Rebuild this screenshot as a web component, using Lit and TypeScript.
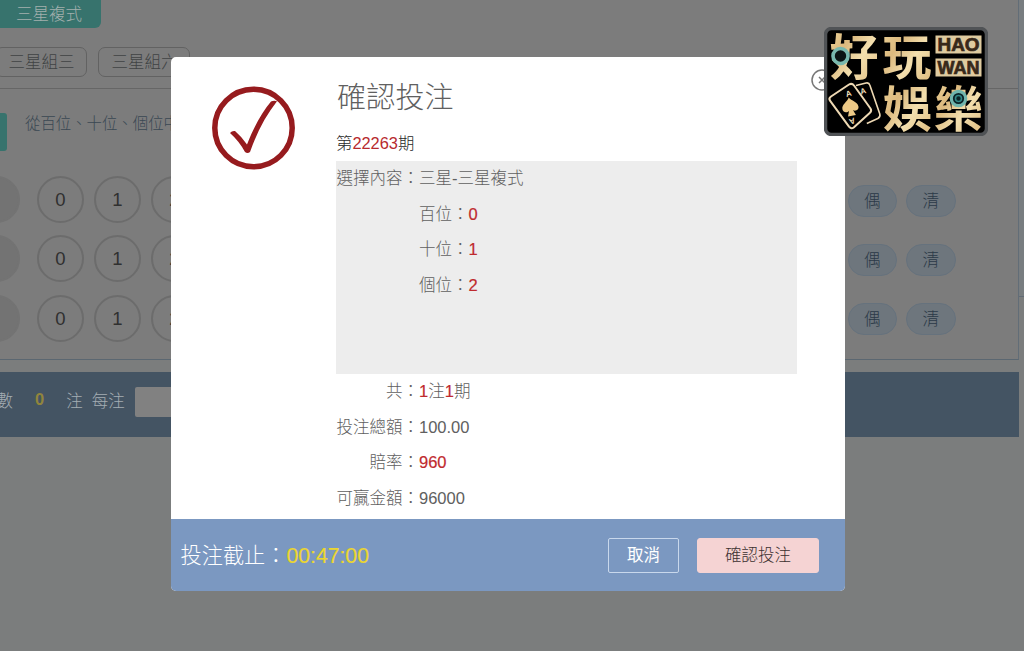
import { LitElement, html, css, svg } from "lit";
import { customElement } from "lit/decorators.js";

@customElement("brand-logo")
class BrandLogo extends LitElement {
  static styles = css`
    :host { display: block; }
    svg { display: block; }
    .glyph { font: 700 49px/1 "Noto Sans CJK TC", sans-serif; }
    .latin { font: 700 18px/1 "Liberation Sans", sans-serif; fill: #38291a; stroke: #38291a; stroke-width: .7px; }
    .pip { font: 700 8px/1 "Liberation Sans", sans-serif; fill: #f0dfba; }
  `;
  render() {
    return html`<svg width="164" height="109" viewBox="824 27.5 164 109">
      <defs>
        <linearGradient id="gold" x1="0" y1="0" x2="1" y2="1">
          <stop offset="0" stop-color="#f0d9a0" />
          <stop offset=".35" stop-color="#dcb97e" />
          <stop offset=".6" stop-color="#f3dfae" />
          <stop offset="1" stop-color="#d9b476" />
        </linearGradient>
      </defs>
      <rect x="825.5" y="29" width="161" height="106" rx="6" fill="#000" stroke="#505356" stroke-width="3.5" />
      <g class="glyph" fill="url(#gold)">
        <text x="829.5" y="75.500">好</text>
        <text x="882.5" y="75.500">玩</text>
        <text x="883" y="127.500">娛</text>
        <text x="934" y="127.500">樂</text>
      </g>
      <rect x="935.5" y="36" width="46" height="18" fill="#dfcba0" />
      <rect x="935.5" y="59" width="46" height="18" fill="#dfcba0" />
      <text class="latin" x="937.5" y="51.500" textLength="42" lengthAdjust="spacingAndGlyphs">HAO</text>
      <text class="latin" x="937.5" y="74.500" textLength="42" lengthAdjust="spacingAndGlyphs">WAN</text>
      <circle cx="840.5" cy="56.5" r="7.5" fill="#0b1414" stroke="#78b8ae" stroke-width="3.6" />
      <circle cx="958.5" cy="99" r="7.2" fill="#0b2226" stroke="#6fb5ad" stroke-width="3.2" />
      <circle cx="958.5" cy="99" r="3" fill="none" stroke="#2f8584" stroke-width="1.6" />
      <g fill="none" stroke="#eed9b4" stroke-width="2" stroke-linejoin="round">
        <path d="M856 86l10-2.5q3-.7 3.8 2l10 29q.8 3-2 4.5l-11 5" stroke-width="1.6" />
        <path fill="#000" d="M831 97l18-12q3-1.700 5 1l16.500 23q1.600 2.500-.8 4.500l-16 14.500q-2.500 2-4.700-.8l-19-26q-1.600-2.400 1-4.200z" />
      </g>
      ${svg`<path transform="rotate(-10 850 108)" fill="#edc986" d="M850.500 98c2 4 8 5.500 8 10.500 0 3.500-4 4.500-6 2.500l2 5.500h-8l2-5.500c-2 2-6.300 1-6.300-2.500 0-5 6.300-6.500 8.300-10.500z"/>`}
      <text class="pip" transform="translate(846.5 97.500) rotate(-15)">A</text>
      <text class="pip" transform="translate(861 95) rotate(-15)">A</text>
      <text class="pip" transform="translate(854 118) rotate(160)">A</text>
    </svg>`;
  }
}

@customElement("bet-page")
class BetPage extends LitElement {
  static styles = css`
    :host { display: flex; height: 651px; overflow: hidden; background: #7b7d7d; color: #484848; }
    * { box-sizing: border-box; }
    .main { width: 1019px; flex: none; display: flex; flex-direction: column; overflow: hidden; }
    .board { height: 360px; flex: none; border-right: 1px solid #626d77; border-bottom: 1px solid #5b6771; background: #7c7c7c; }
    .head { height: 89px; border-bottom: 1px solid #666; }
    .tab { width: 101px; height: 28px; line-height: 28px; background: #37736d; border-radius: 0 0 6px 0; color: #a3b0ae; padding-left: 16px; font-size: 16.5px; }
    .chips { display: flex; gap: 11px; margin: 19px 0 0 -5px; }
    .chip { width: 92px; height: 30px; line-height: 28px; border: 1px solid #626262; border-radius: 7px; padding-left: 12.500px; font-size: 16.5px; color: #404344; white-space: nowrap; }
    .intro { display: flex; gap: 18px; padding-top: 24px; height: 86.500px; font-size: 15.4px; color: #3a4853; white-space: nowrap; }
    .marker { width: 7px; height: 38px; background: #37736d; border-radius: 0 3px 3px 0; }
    .hint { line-height: 21px; }
    .row { display: flex; align-items: center; height: 48px; margin-bottom: 11.3px; }
    .ball { width: 47px; height: 47px; border: 2px solid #6c6c6c; border-radius: 50%; margin-right: 10px; font-size: 18.500px; line-height: 43px; text-align: center; color: #303030; flex: none; }
    .place { background: #737373; border-color: #737373; margin: 0 17px 0 -27px; }
    .tools { display: flex; gap: 9px; margin-left: auto; padding: 2.500px 62.500px 0 0; }
    .tool { width: 49.5px; height: 32px; line-height: 30px; border: 1px solid #66727d; border-radius: 16px; background: #6e767d; color: #2b3947; text-align: center; font-size: 16.5px; }
    .bar { height: 65px; flex: none; margin-top: 12px; background: #445463; display: flex; align-items: center; color: #a5adb3; font-size: 16.5px; white-space: nowrap; overflow: hidden; padding-bottom: 6px; }
    .bar span { padding-bottom: 4px; }
    .qty { margin-left: -3.500px; }
    .zero { color: #91853c; margin: 0 22px; font-weight: 700; }
    .per { margin: 0 10px 0 9px; }
    .amount { width: 90px; height: 30px; background: #818181; border-radius: 2px; }
    .side { flex: 1; height: 297px; background: #787d80; border-bottom: 1px solid #616b75; }
  `;
  render() {
    return html`
      <div class="main">
        <div class="board">
          <div class="head">
            <div class="tab">三星複式</div>
            <div class="chips"><div class="chip">三星組三</div><div class="chip">三星組六</div></div>
          </div>
          <div class="intro"><div class="marker"></div><div class="hint">從百位、十位、個位中</div></div>
          ${[0, 1, 2].map(() => html`<div class="row">
            <div class="ball place"></div>
            ${[0, 1, 2].map((n) => html`<div class="ball">${n}</div>`)}
            <div class="tools"><div class="tool">偶</div><div class="tool">清</div></div>
          </div>`)}
        </div>
        <div class="bar">
          <span class="qty">數</span><span class="zero">0</span><span>注</span><span class="per">每注</span>
          <div class="amount"></div>
        </div>
      </div>
      <div class="side"></div>`;
  }
}

@customElement("confirm-dialog")
class ConfirmDialog extends LitElement {
  static styles = css`
    :host { display: flex; flex-direction: column; width: 674px; height: 534px; background: #fff; border-radius: 5px; overflow: hidden; color: #606060; font-size: 16.5px; }
    * { box-sizing: border-box; }
    .body { display: flex; height: 462px; }
    .mark { width: 165px; padding: 28px 0 0 40px; flex: none; }
    .mark svg { display: block; }
    .title { font-size: 29px; line-height: 40px; padding: 21px 0 0 1px; letter-spacing: .2px; }
    .issue { font-size: 16.400px; line-height: 24px; margin: 13px 0 6px; color: #282828; }
    .issue b { font-weight: 300; color: #b72a2e; }
    .panel { width: 461px; height: 213px; background: #ededed; }
    .line { display: flex; height: 35.6px; line-height: 34px; white-space: nowrap; }
    .label { width: 83px; text-align: right; flex: none; }
    .red { color: #bf2a2e; }
    .strong { -webkit-text-stroke: .2px #bf2a2e; }
    .foot { height: 72px; background: #7b98c1; display: flex; align-items: center; padding: 0 26px 0 9.500px; color: #fff; }
    .due { font-size: 21.2px; margin-right: auto; white-space: nowrap; padding-bottom: 4px; }
    .time { color: #ecd62f; -webkit-text-stroke: .2px #ecd62f; }
    .btn { height: 35px; line-height: 32px; border: 1px solid #c9d8ec; border-radius: 2px; text-align: center; }
    .cancel { width: 71px; font-weight: 400; margin-right: 18px; }
    .ok { width: 122px; background: #f5d3d3; border-color: #f5d3d3; color: #3c3030; border-radius: 3px; }
  `;
  private line(label: string, value: unknown) {
    return html`<div class="line"><span class="label">${label}</span><span>${value}</span></div>`;
  }
  private red(v: string) {
    return html`<span class="red strong">${v}</span>`;
  }
  render() {
    return html`
      <div class="body">
        <div class="mark">
          <svg width="86" height="86" viewBox="0 0 86 86">
            <circle cx="42.500" cy="43" r="38.700" fill="none" stroke="#961b1e" stroke-width="5.500" />
            <path fill="#961b1e" d="M19 48q2-2.500 5-2 6 5 12 13.500C43 42 51 27 60 16.500q3-1.500 6-.3C55 30 46 47 39 67q-2.500 2-5 0Q28 56 19 48z" />
          </svg>
        </div>
        <div>
          <div class="title">確認投注</div>
          <div class="issue">第<b>22263</b>期</div>
          <div class="panel">
            ${this.line("選擇內容：", "三星-三星複式")}
            ${this.line("", html`百位：${this.red("0")}`)}
            ${this.line("", html`十位：${this.red("1")}`)}
            ${this.line("", html`個位：${this.red("2")}`)}
          </div>
          ${this.line("共：", html`${this.red("1")}注${this.red("1")}期`)}
          ${this.line("投注總額：", "100.00")}
          ${this.line("賠率：", this.red("960"))}
          ${this.line("可贏金額：", "96000")}
        </div>
      </div>
      <div class="foot">
        <div class="due">投注截止：<span class="time">00:47:00</span></div>
        <div class="btn cancel">取消</div>
        <div class="btn ok">確認投注</div>
      </div>`;
  }
}

@customElement("app-root")
class AppRoot extends LitElement {
  static styles = css`
    :host { display: block; position: relative; width: 1024px; height: 651px; overflow: hidden; font-family: "Liberation Sans", "Noto Sans CJK TC", sans-serif; font-weight: 300; }
    .dialog { position: absolute; left: 171px; top: 57px; }
    .close { position: absolute; left: 811px; top: 69px; }
    .logo { position: absolute; left: 824px; top: 27px; }
  `;
  render() {
    return html`
      <bet-page></bet-page>
      <confirm-dialog class="dialog"></confirm-dialog>
      <svg class="close" width="24" height="24" viewBox="0 0 24 24" fill="none" stroke="#777" stroke-width="1.500">
        <circle cx="11" cy="11" r="10" /><path d="M8 8l6 6m0-6l-6 6" />
      </svg>
      <brand-logo class="logo"></brand-logo>`;
  }
}
